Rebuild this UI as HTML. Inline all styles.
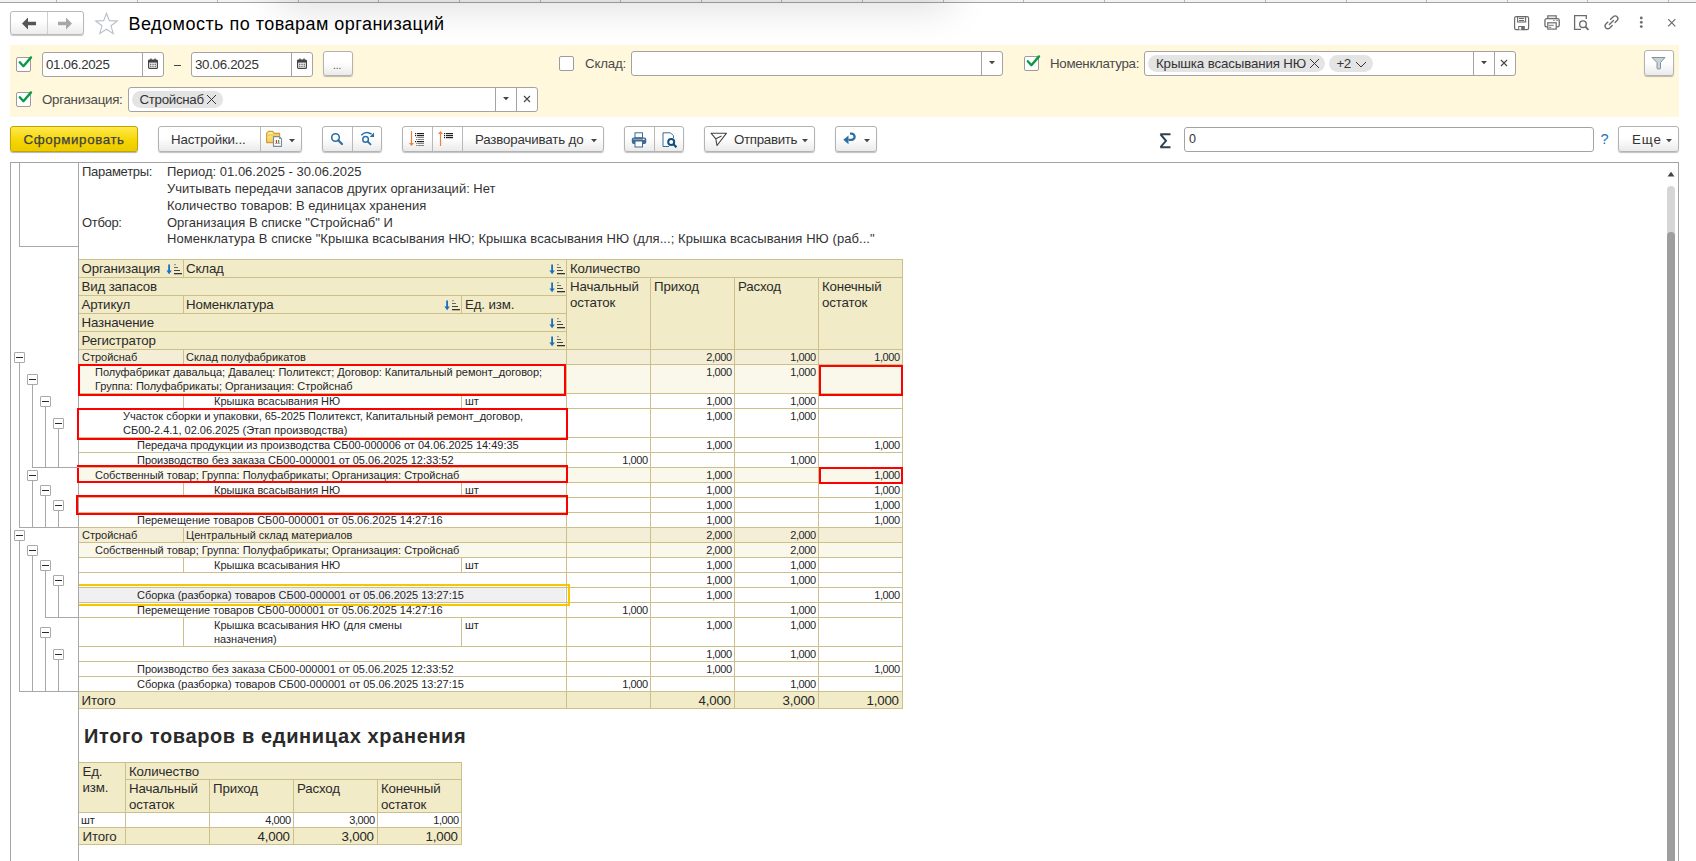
<!DOCTYPE html>
<html><head><meta charset="utf-8"><style>
html,body{margin:0;padding:0;width:1696px;height:861px;overflow:hidden;background:#fff;position:relative;}
body{font-family:"Liberation Sans", sans-serif;}
.t{position:absolute;white-space:pre;line-height:1;font-family:"Liberation Sans", sans-serif;}
svg{overflow:visible;}
</style></head><body>
<div style="position:absolute;left:0px;top:0px;width:1696px;height:2px;background:#f3f3f3;"></div>
<div style="position:absolute;left:0px;top:2px;width:1696px;height:1px;background:#a3a3a3;"></div>
<div style="position:absolute;left:56px;top:0px;width:1px;height:2px;background:#b5b5b5;"></div>
<div style="position:absolute;left:137px;top:0px;width:1px;height:2px;background:#b5b5b5;"></div>
<div style="position:absolute;left:217px;top:0px;width:1px;height:2px;background:#b5b5b5;"></div>
<div style="position:absolute;left:298px;top:0px;width:1px;height:2px;background:#b5b5b5;"></div>
<div style="position:absolute;left:378px;top:0px;width:1px;height:2px;background:#b5b5b5;"></div>
<div style="position:absolute;left:459px;top:0px;width:1px;height:2px;background:#b5b5b5;"></div>
<div style="position:absolute;left:540px;top:0px;width:1px;height:2px;background:#b5b5b5;"></div>
<div style="position:absolute;left:620px;top:0px;width:1px;height:2px;background:#b5b5b5;"></div>
<div style="position:absolute;left:701px;top:0px;width:1px;height:2px;background:#b5b5b5;"></div>
<div style="position:absolute;left:781px;top:0px;width:1px;height:2px;background:#b5b5b5;"></div>
<div style="position:absolute;left:862px;top:0px;width:1px;height:2px;background:#b5b5b5;"></div>
<div style="position:absolute;left:943px;top:0px;width:1px;height:2px;background:#b5b5b5;"></div>
<div style="position:absolute;left:1023px;top:0px;width:1px;height:2px;background:#b5b5b5;"></div>
<div style="position:absolute;left:1104px;top:0px;width:1px;height:2px;background:#b5b5b5;"></div>
<div style="position:absolute;left:1184px;top:0px;width:1px;height:2px;background:#b5b5b5;"></div>
<div style="position:absolute;left:1265px;top:0px;width:1px;height:2px;background:#b5b5b5;"></div>
<div style="position:absolute;left:1346px;top:0px;width:1px;height:2px;background:#b5b5b5;"></div>
<div style="position:absolute;left:1426px;top:0px;width:1px;height:2px;background:#b5b5b5;"></div>
<div style="position:absolute;left:1507px;top:0px;width:1px;height:2px;background:#b5b5b5;"></div>
<div style="position:absolute;left:1587px;top:0px;width:1px;height:2px;background:#b5b5b5;"></div>
<div style="position:absolute;left:1668px;top:0px;width:1px;height:2px;background:#b5b5b5;"></div>
<div style="position:absolute;left:285px;top:-24px;width:660px;height:24px;background:#000;box-shadow:0 0 40px 6px rgba(0,0,0,0.15);z-index:1;"></div>
<div style="position:absolute;left:10px;top:11px;width:73px;height:23px;border:1px solid #b9b9b9;border-radius:3px;background:linear-gradient(#ffffff 40%,#ececec);box-shadow:0 1px 1px rgba(0,0,0,0.22);box-sizing:border-box;width:74px;height:24px;"></div>
<div style="position:absolute;left:47px;top:12px;width:1px;height:22px;background:#cfcfcf;"></div>
<svg style="position:absolute;left:22px;top:17px;" width="15" height="13" viewBox="0 0 15 13"><path d="M0 6.5 L6 0.5 L6 4.8 L14 4.8 L14 8.2 L6 8.2 L6 12.5 Z" fill="#555"/></svg>
<svg style="position:absolute;left:57px;top:17px;" width="15" height="13" viewBox="0 0 15 13"><path d="M15 6.5 L9 0.5 L9 4.8 L1 4.8 L1 8.2 L9 8.2 L9 12.5 Z" fill="#a8a8a8"/></svg>
<svg style="position:absolute;left:94px;top:12px;" width="25" height="23" viewBox="0 0 25 23"><path d="M12.5 1.2 L15.3 8.6 L23.3 8.9 L17 13.8 L19.2 21.6 L12.5 17.2 L5.8 21.6 L8 13.8 L1.7 8.9 L9.7 8.6 Z" fill="none" stroke="#b7bec6" stroke-width="1.1" stroke-linejoin="miter"/></svg>
<div class="t" style="left:128.5px;top:14.76px;font-size:18px;color:#000;letter-spacing:0.48px;">Ведомость по товарам организаций</div>
<svg style="position:absolute;left:1513px;top:15px;" width="17" height="16" viewBox="0 0 17 16"><rect x="1.6" y="1.6" width="14" height="13" rx="1.6" fill="none" stroke="#6b6b6b" stroke-width="1.2"/><rect x="4.6" y="1.6" width="8" height="5.4" fill="none" stroke="#6b6b6b" stroke-width="1.1"/><line x1="6" y1="3.5" x2="11.2" y2="3.5" stroke="#6b6b6b" stroke-width="1"/><line x1="6" y1="5.5" x2="11.2" y2="5.5" stroke="#6b6b6b" stroke-width="1"/><rect x="5.2" y="11" width="6.6" height="3.6" fill="#6b6b6b"/><rect x="6.2" y="12" width="2" height="2.6" fill="#fff"/></svg>
<svg style="position:absolute;left:1543px;top:14px;" width="18" height="17" viewBox="0 0 18 17"><rect x="4.8" y="1.85" width="8.4" height="2.6" fill="none" stroke="#6b6b6b" stroke-width="1.2"/><rect x="1.95" y="4.65" width="14.3" height="8.3" rx="1.8" fill="none" stroke="#6b6b6b" stroke-width="1.3"/><rect x="4.8" y="8.8" width="8.4" height="6.3" fill="#fff" stroke="#6b6b6b" stroke-width="1.2"/><line x1="5.9" y1="11.3" x2="10.8" y2="11.3" stroke="#6b6b6b" stroke-width="0.9"/><line x1="5.9" y1="13.3" x2="8.3" y2="13.3" stroke="#6b6b6b" stroke-width="0.9"/><line x1="10.2" y1="6.4" x2="11.7" y2="6.4" stroke="#6b6b6b" stroke-width="0.9"/><line x1="13.2" y1="6.4" x2="14.8" y2="6.4" stroke="#6b6b6b" stroke-width="0.9"/></svg>
<svg style="position:absolute;left:1573px;top:14px;" width="18" height="17" viewBox="0 0 18 17"><path d="M8 15.3 L1.6 15.3 L1.6 1.6 L13.3 1.6 L13.3 5" fill="none" stroke="#6b6b6b" stroke-width="1.3"/><circle cx="10" cy="10.2" r="3.3" fill="none" stroke="#6b6b6b" stroke-width="1.4"/><line x1="12.3" y1="12.6" x2="15.5" y2="15.8" stroke="#6b6b6b" stroke-width="1.8"/></svg>
<svg style="position:absolute;left:1603px;top:14px;" width="18" height="17" viewBox="0 0 18 17"><path d="M4.9 8.1 L2.89 10.09 A2.7 2.7 0 0 0 6.71 13.91 L9.2 11.4" fill="none" stroke="#6b6b6b" stroke-width="1.35" stroke-linecap="round"/><path d="M7.6 5.3 L10.24 2.74 A2.7 2.7 0 0 1 14.06 6.56 L12.06 8.56" fill="none" stroke="#6b6b6b" stroke-width="1.35" stroke-linecap="round"/><line x1="6.4" y1="10.6" x2="10.5" y2="6.5" stroke="#6b6b6b" stroke-width="1.35" stroke-linecap="round"/></svg>
<svg style="position:absolute;left:1639px;top:16px;" width="5" height="13" viewBox="0 0 5 13"><circle cx="2.3" cy="2" r="1.4" fill="#6b6b6b"/><circle cx="2.3" cy="6.3" r="1.4" fill="#6b6b6b"/><circle cx="2.3" cy="10.6" r="1.4" fill="#6b6b6b"/></svg>
<svg style="position:absolute;left:1667px;top:18px;" width="10" height="10" viewBox="0 0 10 10"><path d="M1.2 1.2 L8.3 8.3 M8.3 1.2 L1.2 8.3" stroke="#6b6b6b" stroke-width="1.2"/></svg>
<div style="position:absolute;left:10px;top:45px;width:1669px;height:72px;background:#fff8dc;"></div>
<div style="position:absolute;left:16px;top:57px;width:15px;height:15px;box-sizing:border-box;border:1px solid #9c9c9c;border-radius:2px;background:#fff;"></div>
<svg style="position:absolute;left:18px;top:56px;" width="15" height="13" viewBox="0 0 15 13"><path d="M1.8 6.3 L5.4 10.2 L13 1.4" fill="none" stroke="#0b9a44" stroke-width="2.4" stroke-linecap="round" stroke-linejoin="round"/></svg>
<div style="position:absolute;left:42px;top:52px;width:122px;height:25px;box-sizing:border-box;border:1px solid #a3a3a3;border-radius:3px;background:#fff;"></div>
<div style="position:absolute;left:142px;top:52px;width:1px;height:25px;background:#a3a3a3;"></div>
<div class="t" style="left:46px;top:57.74px;font-size:13.3px;color:#333;letter-spacing:-0.3px;">01.06.2025</div>
<svg style="position:absolute;left:148px;top:58px;" width="10" height="11" viewBox="0 0 10 11"><rect x="0.6" y="2" width="8.8" height="8.4" rx="1" fill="#fff" stroke="#444" stroke-width="1.2"/><rect x="0.6" y="2" width="8.8" height="2.6" fill="#444"/><rect x="2.3" y="0.5" width="1.3" height="2.5" fill="#444"/><rect x="6.4" y="0.5" width="1.3" height="2.5" fill="#444"/><g fill="#444"><circle cx="2.8" cy="6.3" r="0.7"/><circle cx="5" cy="6.3" r="0.7"/><circle cx="7.2" cy="6.3" r="0.7"/><circle cx="2.8" cy="8.3" r="0.7"/><circle cx="5" cy="8.3" r="0.7"/><circle cx="7.2" cy="8.3" r="0.7"/></g></svg>
<div style="position:absolute;left:174px;top:65px;width:7px;height:1px;background:#444;"></div>
<div style="position:absolute;left:191px;top:52px;width:122px;height:25px;box-sizing:border-box;border:1px solid #a3a3a3;border-radius:3px;background:#fff;"></div>
<div style="position:absolute;left:291px;top:52px;width:1px;height:25px;background:#a3a3a3;"></div>
<div class="t" style="left:195px;top:57.74px;font-size:13.3px;color:#333;letter-spacing:-0.3px;">30.06.2025</div>
<svg style="position:absolute;left:297px;top:58px;" width="10" height="11" viewBox="0 0 10 11"><rect x="0.6" y="2" width="8.8" height="8.4" rx="1" fill="#fff" stroke="#444" stroke-width="1.2"/><rect x="0.6" y="2" width="8.8" height="2.6" fill="#444"/><rect x="2.3" y="0.5" width="1.3" height="2.5" fill="#444"/><rect x="6.4" y="0.5" width="1.3" height="2.5" fill="#444"/><g fill="#444"><circle cx="2.8" cy="6.3" r="0.7"/><circle cx="5" cy="6.3" r="0.7"/><circle cx="7.2" cy="6.3" r="0.7"/><circle cx="2.8" cy="8.3" r="0.7"/><circle cx="5" cy="8.3" r="0.7"/><circle cx="7.2" cy="8.3" r="0.7"/></g></svg>
<div style="position:absolute;left:323px;top:51px;width:30px;height:25px;box-sizing:border-box;border:1px solid #b3b3b3;border-radius:3px;background:linear-gradient(#ffffff 45%,#ebebeb);box-shadow:0 1px 1px rgba(0,0,0,0.25);"></div>
<div class="t" style="left:333px;top:60.53px;font-size:10px;color:#444;">...</div>
<div style="position:absolute;left:559px;top:56px;width:15px;height:15px;box-sizing:border-box;border:1px solid #9c9c9c;border-radius:2px;background:#fff;"></div>
<div class="t" style="left:585px;top:57.24px;font-size:13.3px;color:#4a4a4a;letter-spacing:-0.2px;">Склад:</div>
<div style="position:absolute;left:631px;top:51px;width:372px;height:25px;box-sizing:border-box;border:1px solid #a3a3a3;border-radius:3px;background:#fff;"></div>
<div style="position:absolute;left:981px;top:51px;width:1px;height:25px;background:#a3a3a3;"></div>
<svg style="position:absolute;left:988.5px;top:61px;" width="7" height="4" viewBox="0 0 7 4"><path d="M0 0 L6 0 L3 3.3 Z" fill="#444"/></svg>
<div style="position:absolute;left:1024px;top:56px;width:15px;height:15px;box-sizing:border-box;border:1px solid #9c9c9c;border-radius:2px;background:#fff;"></div>
<svg style="position:absolute;left:1026px;top:55px;" width="15" height="13" viewBox="0 0 15 13"><path d="M1.8 6.3 L5.4 10.2 L13 1.4" fill="none" stroke="#0b9a44" stroke-width="2.4" stroke-linecap="round" stroke-linejoin="round"/></svg>
<div class="t" style="left:1050px;top:57.24px;font-size:13.3px;color:#4a4a4a;letter-spacing:-0.3px;">Номенклатура:</div>
<div style="position:absolute;left:1144px;top:51px;width:372px;height:25px;box-sizing:border-box;border:1px solid #a3a3a3;border-radius:3px;background:#fff;"></div>
<div style="position:absolute;left:1473px;top:51px;width:1px;height:25px;background:#a3a3a3;"></div>
<div style="position:absolute;left:1494px;top:51px;width:1px;height:25px;background:#a3a3a3;"></div>
<svg style="position:absolute;left:1480.5px;top:61px;" width="7" height="4" viewBox="0 0 7 4"><path d="M0 0 L6 0 L3 3.3 Z" fill="#444"/></svg>
<svg style="position:absolute;left:1500px;top:59px;" width="9" height="9" viewBox="0 0 9 9"><path d="M1 1 L7 7 M7 1 L1 7" stroke="#444" stroke-width="1.1"/></svg>
<div style="position:absolute;left:1148px;top:55px;width:177px;height:17px;background:#e4e4e4;border-radius:9px;"></div>
<div class="t" style="left:1156px;top:57.24px;font-size:13.3px;color:#333;letter-spacing:-0.13px;">Крышка всасывания НЮ</div>
<svg style="position:absolute;left:1309px;top:58px;" width="11" height="11" viewBox="0 0 11 11"><path d="M1 1 L10 10 M10 1 L1 10" stroke="#333" stroke-width="1.0"/></svg>
<div style="position:absolute;left:1329px;top:55px;width:44px;height:17px;background:#e4e4e4;border-radius:9px;"></div>
<div class="t" style="left:1336.5px;top:57.24px;font-size:13.3px;color:#333;letter-spacing:-0.6px;">+2</div>
<svg style="position:absolute;left:1354.5px;top:60.5px;" width="12" height="8" viewBox="0 0 12 8"><path d="M1 1 L6 6 L11 1" fill="none" stroke="#333" stroke-width="1.0"/></svg>
<div style="position:absolute;left:1644px;top:50px;width:30px;height:26px;box-sizing:border-box;border:1px solid #b3b3b3;border-radius:3px;background:linear-gradient(#ffffff 45%,#ebebeb);box-shadow:0 1px 1px rgba(0,0,0,0.25);"></div>
<svg style="position:absolute;left:1651px;top:56px;" width="16" height="14" viewBox="0 0 16 14"><path d="M1 1.5 L14 1.5 L9.5 6.5 L9.5 12 A1 1 0 0 1 8.5 13 L7 13 A1 1 0 0 1 6 12 L6 6.5 Z" fill="#c9d1d9" stroke="#8593a0" stroke-width="1"/></svg>
<div style="position:absolute;left:16px;top:92px;width:15px;height:15px;box-sizing:border-box;border:1px solid #9c9c9c;border-radius:2px;background:#fff;"></div>
<svg style="position:absolute;left:18px;top:91px;" width="15" height="13" viewBox="0 0 15 13"><path d="M1.8 6.3 L5.4 10.2 L13 1.4" fill="none" stroke="#0b9a44" stroke-width="2.4" stroke-linecap="round" stroke-linejoin="round"/></svg>
<div class="t" style="left:42px;top:93.24px;font-size:13.3px;color:#4a4a4a;letter-spacing:-0.28px;">Организация:</div>
<div style="position:absolute;left:128px;top:87px;width:410px;height:25px;box-sizing:border-box;border:1px solid #a3a3a3;border-radius:3px;background:#fff;"></div>
<div style="position:absolute;left:495px;top:87px;width:1px;height:25px;background:#a3a3a3;"></div>
<div style="position:absolute;left:516px;top:87px;width:1px;height:25px;background:#a3a3a3;"></div>
<svg style="position:absolute;left:502.5px;top:97px;" width="7" height="4" viewBox="0 0 7 4"><path d="M0 0 L6 0 L3 3.3 Z" fill="#444"/></svg>
<svg style="position:absolute;left:523px;top:95px;" width="9" height="9" viewBox="0 0 9 9"><path d="M1 1 L7 7 M7 1 L1 7" stroke="#444" stroke-width="1.1"/></svg>
<div style="position:absolute;left:132px;top:91px;width:91px;height:17px;background:#e4e4e4;border-radius:9px;"></div>
<div class="t" style="left:139.5px;top:93.24px;font-size:13.3px;color:#333;letter-spacing:-0.3px;">Стройснаб</div>
<svg style="position:absolute;left:206px;top:93.5px;" width="11" height="11" viewBox="0 0 11 11"><path d="M1 1 L10 10 M10 1 L1 10" stroke="#333" stroke-width="1.0"/></svg>
<div style="position:absolute;left:10px;top:126px;width:128px;height:26px;box-sizing:border-box;border:1px solid #c2a400;border-radius:3px;background:linear-gradient(#ffe94d,#f5d400 60%,#eccb00);box-shadow:0 1px 1px rgba(0,0,0,0.3);"></div>
<div class="t" style="left:23.5px;top:132.74px;font-size:13.3px;color:#3a3f4a;letter-spacing:0.62px;-webkit-text-stroke:0.25px #3a3f4a;">Сформировать</div>
<div style="position:absolute;left:158px;top:126px;width:144px;height:26px;box-sizing:border-box;border:1px solid #b3b3b3;border-radius:3px;background:linear-gradient(#ffffff 45%,#ebebeb);box-shadow:0 1px 1px rgba(0,0,0,0.25);"></div>
<div style="position:absolute;left:260px;top:127px;width:1px;height:24px;background:#b8b8b8;"></div>
<div class="t" style="left:171px;top:132.74px;font-size:13.3px;color:#333;letter-spacing:-0.15px;">Настройки...</div>
<svg style="position:absolute;left:262px;top:128px;" width="24" height="22" viewBox="0 0 24 22"><defs><linearGradient id="fg" x1="0" y1="0" x2="0" y2="1"><stop offset="0" stop-color="#fff38a"/><stop offset="1" stop-color="#f2cc5a"/></linearGradient></defs><path d="M4.6 14.6 L4.6 5.2 L6.6 3.4 L10.6 3.4 L12.2 5.4 L17.6 5.4 L17.6 14.6 Z" fill="url(#fg)" stroke="#d19a3c" stroke-width="1.1" stroke-linejoin="round"/><line x1="4.8" y1="7" x2="17.4" y2="7" stroke="#dcae4e" stroke-width="0.8"/><path d="M11.5 8.6 L17.3 8.6 L19.5 10.8 L19.5 18.4 L11.5 18.4 Z" fill="#fff" stroke="#7d8b98" stroke-width="1.1" stroke-linejoin="round"/><path d="M17.2 8.6 L17.2 10.9 L19.5 10.9 Z" fill="#7d8b98"/><rect x="13.8" y="12" width="1.3" height="3.2" fill="#e8302c"/><rect x="16" y="12" width="1.3" height="3.2" fill="#3cb04a"/><line x1="13" y1="15.5" x2="18.2" y2="15.5" stroke="#8a7fa0" stroke-width="0.6"/></svg>
<svg style="position:absolute;left:289px;top:139px;" width="7" height="4" viewBox="0 0 7 4"><path d="M0 0 L6 0 L3 3.3 Z" fill="#444"/></svg>
<div style="position:absolute;left:322px;top:126px;width:60px;height:26px;box-sizing:border-box;border:1px solid #b3b3b3;border-radius:3px;background:linear-gradient(#ffffff 45%,#ebebeb);box-shadow:0 1px 1px rgba(0,0,0,0.25);"></div>
<div style="position:absolute;left:352px;top:127px;width:1px;height:24px;background:#b8b8b8;"></div>
<svg style="position:absolute;left:330px;top:131px;" width="14" height="15" viewBox="0 0 14 15"><circle cx="5.5" cy="6.5" r="3.8" fill="none" stroke="#2a6fa8" stroke-width="1.6"/><line x1="8.2" y1="9.2" x2="12" y2="13" stroke="#2a6fa8" stroke-width="2.2" stroke-linecap="round"/></svg>
<svg style="position:absolute;left:359px;top:130px;" width="17" height="17" viewBox="0 0 17 17"><path d="M2.2 5.2 Q7.2 0.4 12.6 4.2" fill="none" stroke="#2a6fa8" stroke-width="1.5"/><path d="M10.6 6.9 L15.1 6.9 L15 2.6 Z" fill="#2a6fa8"/><circle cx="6.6" cy="9.4" r="2.8" fill="none" stroke="#2a6fa8" stroke-width="1.5"/><line x1="8.6" y1="11.4" x2="11.5" y2="14.4" stroke="#2a6fa8" stroke-width="1.8" stroke-linecap="round"/></svg>
<div style="position:absolute;left:402px;top:126px;width:202px;height:26px;box-sizing:border-box;border:1px solid #b3b3b3;border-radius:3px;background:linear-gradient(#ffffff 45%,#ebebeb);box-shadow:0 1px 1px rgba(0,0,0,0.25);"></div>
<div style="position:absolute;left:432px;top:127px;width:1px;height:24px;background:#b8b8b8;"></div>
<div style="position:absolute;left:462px;top:127px;width:1px;height:24px;background:#b8b8b8;"></div>
<svg style="position:absolute;left:408px;top:130px;" width="18" height="18" viewBox="0 0 18 18"><line x1="3.5" y1="1" x2="3.5" y2="13" stroke="#f08040" stroke-width="1.2"/><path d="M1 13 L6 13 L3.5 16 Z" fill="#f08040"/><g fill="#222"><rect x="7" y="3" width="1.2" height="1.2"/><rect x="9" y="3" width="7" height="1.2"/><rect x="7" y="5" width="1.2" height="1.2"/><rect x="9" y="5" width="7" height="1.2"/><rect x="7" y="11" width="1.2" height="1.2"/><rect x="9" y="11" width="7" height="1.2"/></g><g fill="#888"><rect x="8" y="7" width="1" height="1"/><rect x="9.5" y="7" width="6.5" height="1"/><rect x="8" y="9" width="1" height="1"/><rect x="9.5" y="9" width="6.5" height="1"/><rect x="8" y="13" width="1" height="1"/><rect x="9.5" y="13" width="6.5" height="1"/><rect x="8" y="15" width="1" height="1"/><rect x="9.5" y="15" width="6.5" height="1"/></g></svg>
<svg style="position:absolute;left:436px;top:130px;" width="18" height="18" viewBox="0 0 18 18"><line x1="4.5" y1="4" x2="4.5" y2="16" stroke="#f08040" stroke-width="1.2"/><path d="M2 4 L7 4 L4.5 1 Z" fill="#f08040"/><g fill="#222"><rect x="8" y="3" width="1.2" height="1.2"/><rect x="10" y="3" width="7" height="1.2"/><rect x="8" y="5" width="1.2" height="1.2"/><rect x="10" y="5" width="7" height="1.2"/><rect x="8" y="7" width="1.2" height="1.2"/><rect x="10" y="7" width="7" height="1.2"/></g></svg>
<div class="t" style="left:475px;top:132.74px;font-size:13.3px;color:#333;letter-spacing:-0.15px;">Разворачивать до</div>
<svg style="position:absolute;left:591px;top:139px;" width="7" height="4" viewBox="0 0 7 4"><path d="M0 0 L6 0 L3 3.3 Z" fill="#444"/></svg>
<div style="position:absolute;left:624px;top:126px;width:60px;height:26px;box-sizing:border-box;border:1px solid #b3b3b3;border-radius:3px;background:linear-gradient(#ffffff 45%,#ebebeb);box-shadow:0 1px 1px rgba(0,0,0,0.25);"></div>
<div style="position:absolute;left:654px;top:127px;width:1px;height:24px;background:#b8b8b8;"></div>
<svg style="position:absolute;left:631px;top:132px;" width="16" height="16" viewBox="0 0 16 16"><rect x="4" y="0.8" width="7.5" height="5" fill="#fff" stroke="#3d6a94" stroke-width="1"/><rect x="0.8" y="5.5" width="14.5" height="6.5" rx="2" fill="#3d6a94"/><rect x="2" y="6.8" width="12" height="1.2" fill="#7fa2c2"/><rect x="4" y="9" width="7.5" height="6" fill="#fff" stroke="#3d6a94" stroke-width="1"/><rect x="12" y="6.8" width="1.5" height="1" fill="#fff"/></svg>
<svg style="position:absolute;left:662px;top:132px;" width="17" height="17" viewBox="0 0 17 17"><path d="M7 14.5 L1 14.5 L1 0.8 L8.5 0.8 L11.5 3.8 L11.5 6" fill="#fff" stroke="#3d6a94" stroke-width="1"/><circle cx="9.2" cy="10" r="3" fill="none" stroke="#0e4f80" stroke-width="2"/><line x1="11.5" y1="12.3" x2="14.5" y2="15.3" stroke="#0e4f80" stroke-width="2.2"/></svg>
<div style="position:absolute;left:704px;top:126px;width:111px;height:26px;box-sizing:border-box;border:1px solid #b3b3b3;border-radius:3px;background:linear-gradient(#ffffff 45%,#ebebeb);box-shadow:0 1px 1px rgba(0,0,0,0.25);"></div>
<svg style="position:absolute;left:710px;top:132px;" width="18" height="15" viewBox="0 0 18 15"><path d="M1 1.2 L16.5 1.2 L7 13.5 L5.8 6.8 Z M5.8 6.8 L11.5 4" fill="none" stroke="#444" stroke-width="1.1" stroke-linejoin="round"/></svg>
<div class="t" style="left:734px;top:132.74px;font-size:13.3px;color:#333;letter-spacing:-0.3px;">Отправить</div>
<svg style="position:absolute;left:802px;top:139px;" width="7" height="4" viewBox="0 0 7 4"><path d="M0 0 L6 0 L3 3.3 Z" fill="#444"/></svg>
<div style="position:absolute;left:835px;top:126px;width:42px;height:26px;box-sizing:border-box;border:1px solid #b3b3b3;border-radius:3px;background:linear-gradient(#ffffff 45%,#ebebeb);box-shadow:0 1px 1px rgba(0,0,0,0.25);"></div>
<svg style="position:absolute;left:843px;top:133px;" width="14" height="13" viewBox="0 0 14 13"><path d="M5.5 6.8 L8.5 6.8 A3.1 3.1 0 0 0 8.5 0.6 L7 0.6" fill="none" stroke="#2a6fa8" stroke-width="2.3"/><path d="M0.3 6.8 L5.5 2.6 L5.5 11.2 Z" fill="#2a6fa8"/></svg>
<svg style="position:absolute;left:864px;top:139px;" width="7" height="4" viewBox="0 0 7 4"><path d="M0 0 L6 0 L3 3.3 Z" fill="#444"/></svg>
<svg style="position:absolute;left:1159px;top:132.7px;" width="13" height="16" viewBox="0 0 13 16"><path d="M1.2 1.2 L11.5 1.2 M1.2 14.3 L11.5 14.3 M1.5 1.3 L7 7.8 L1.5 14.2" fill="none" stroke="#2f4252" stroke-width="2"/></svg>
<div style="position:absolute;left:1184px;top:127px;width:410px;height:25px;box-sizing:border-box;border:1px solid #a3a3a3;border-radius:3px;background:#fff;"></div>
<div class="t" style="left:1189px;top:133.42px;font-size:12.5px;color:#333;">0</div>
<div class="t" style="left:1600.5px;top:132.03px;font-size:14.5px;color:#1b75bc;">?</div>
<div style="position:absolute;left:1618px;top:126px;width:61px;height:26px;box-sizing:border-box;border:1px solid #b3b3b3;border-radius:3px;background:linear-gradient(#ffffff 45%,#ebebeb);box-shadow:0 1px 1px rgba(0,0,0,0.25);"></div>
<div class="t" style="left:1632px;top:132.74px;font-size:13.3px;color:#333;letter-spacing:0.9px;">Еще</div>
<svg style="position:absolute;left:1666px;top:139px;" width="7" height="4" viewBox="0 0 7 4"><path d="M0 0 L6 0 L3 3.3 Z" fill="#444"/></svg>
<div style="position:absolute;left:10px;top:162px;width:1669px;height:700px;box-sizing:border-box;border:1px solid #a3a3a3;border-bottom:none;background:#fff;"></div>
<svg style="position:absolute;left:1667px;top:171px;" width="8" height="6" viewBox="0 0 8 6"><path d="M0.5 5.5 L7.5 5.5 L4 0.8 Z" fill="#444"/></svg>
<div style="position:absolute;left:1667px;top:186px;width:8px;height:700px;background:#d6d6d6;border-radius:4px;"></div>
<div style="position:absolute;left:1667px;top:232px;width:8px;height:700px;background:#9e9e9e;border-radius:4px;"></div>
<div style="position:absolute;left:19px;top:162px;width:1px;height:85px;background:#a8a8a8;"></div>
<div style="position:absolute;left:19px;top:246px;width:60px;height:1px;background:#a8a8a8;"></div>
<div style="position:absolute;left:78px;top:162px;width:1px;height:700px;background:#a8a8a8;"></div>
<div class="t" style="left:82px;top:165.00px;font-size:13px;color:#333;letter-spacing:-0.27px;">Параметры:</div>
<div class="t" style="left:167px;top:165.00px;font-size:13px;color:#333;">Период: 01.06.2025 - 30.06.2025</div>
<div class="t" style="left:167px;top:182.00px;font-size:13px;color:#333;">Учитывать передачи запасов других организаций: Нет</div>
<div class="t" style="left:167px;top:199.00px;font-size:13px;color:#333;">Количество товаров: В единицах хранения</div>
<div class="t" style="left:82px;top:216.00px;font-size:13px;color:#333;letter-spacing:-0.34px;">Отбор:</div>
<div class="t" style="left:167px;top:216.00px;font-size:13px;color:#333;">Организация В списке "Стройснаб" И</div>
<div class="t" style="left:167px;top:232.00px;font-size:13px;color:#333;letter-spacing:0.07px;">Номенклатура В списке "Крышка всасывания НЮ; Крышка всасывания НЮ (для...; Крышка всасывания НЮ (раб..."</div>
<div style="position:absolute;left:79px;top:259px;width:823px;height:90px;background:#f2ebc7;"></div>
<div style="position:absolute;left:79px;top:349px;width:823px;height:15px;background:#f4eed6;"></div>
<div style="position:absolute;left:79px;top:364px;width:823px;height:29px;background:#faf7eb;"></div>
<div style="position:absolute;left:79px;top:467px;width:823px;height:15px;background:#faf7eb;"></div>
<div style="position:absolute;left:79px;top:527px;width:823px;height:15px;background:#f4eed6;"></div>
<div style="position:absolute;left:79px;top:542px;width:823px;height:15px;background:#faf7eb;"></div>
<div style="position:absolute;left:79px;top:588px;width:486px;height:14px;background:#f0f0f0;"></div>
<div style="position:absolute;left:79px;top:691px;width:823px;height:17px;background:#f2ebc7;"></div>
<div style="position:absolute;left:79px;top:259px;width:824px;height:1px;background:#cdbf8c;"></div>
<div style="position:absolute;left:79px;top:277px;width:824px;height:1px;background:#cdbf8c;"></div>
<div style="position:absolute;left:79px;top:295px;width:824px;height:1px;background:#cdbf8c;"></div>
<div style="position:absolute;left:79px;top:313px;width:824px;height:1px;background:#cdbf8c;"></div>
<div style="position:absolute;left:79px;top:331px;width:824px;height:1px;background:#cdbf8c;"></div>
<div style="position:absolute;left:79px;top:349px;width:824px;height:1px;background:#cdbf8c;"></div>
<div style="position:absolute;left:79px;top:364px;width:824px;height:1px;background:#cdbf8c;"></div>
<div style="position:absolute;left:79px;top:393px;width:824px;height:1px;background:#cdbf8c;"></div>
<div style="position:absolute;left:79px;top:408px;width:824px;height:1px;background:#cdbf8c;"></div>
<div style="position:absolute;left:79px;top:437px;width:824px;height:1px;background:#cdbf8c;"></div>
<div style="position:absolute;left:79px;top:452px;width:824px;height:1px;background:#cdbf8c;"></div>
<div style="position:absolute;left:79px;top:467px;width:824px;height:1px;background:#cdbf8c;"></div>
<div style="position:absolute;left:79px;top:482px;width:824px;height:1px;background:#cdbf8c;"></div>
<div style="position:absolute;left:79px;top:497px;width:824px;height:1px;background:#cdbf8c;"></div>
<div style="position:absolute;left:79px;top:512px;width:824px;height:1px;background:#cdbf8c;"></div>
<div style="position:absolute;left:79px;top:527px;width:824px;height:1px;background:#cdbf8c;"></div>
<div style="position:absolute;left:79px;top:542px;width:824px;height:1px;background:#cdbf8c;"></div>
<div style="position:absolute;left:79px;top:557px;width:824px;height:1px;background:#cdbf8c;"></div>
<div style="position:absolute;left:79px;top:572px;width:824px;height:1px;background:#cdbf8c;"></div>
<div style="position:absolute;left:79px;top:587px;width:824px;height:1px;background:#cdbf8c;"></div>
<div style="position:absolute;left:79px;top:602px;width:824px;height:1px;background:#cdbf8c;"></div>
<div style="position:absolute;left:79px;top:617px;width:824px;height:1px;background:#cdbf8c;"></div>
<div style="position:absolute;left:79px;top:646px;width:824px;height:1px;background:#cdbf8c;"></div>
<div style="position:absolute;left:79px;top:661px;width:824px;height:1px;background:#cdbf8c;"></div>
<div style="position:absolute;left:79px;top:676px;width:824px;height:1px;background:#cdbf8c;"></div>
<div style="position:absolute;left:79px;top:691px;width:824px;height:1px;background:#cdbf8c;"></div>
<div style="position:absolute;left:79px;top:708px;width:824px;height:1px;background:#cdbf8c;"></div>
<div style="position:absolute;left:902px;top:259px;width:1px;height:450px;background:#cdbf8c;"></div>
<div style="position:absolute;left:566px;top:259px;width:1px;height:450px;background:#cdbf8c;"></div>
<div style="position:absolute;left:650px;top:277px;width:1px;height:432px;background:#cdbf8c;"></div>
<div style="position:absolute;left:734px;top:277px;width:1px;height:432px;background:#cdbf8c;"></div>
<div style="position:absolute;left:818px;top:277px;width:1px;height:432px;background:#cdbf8c;"></div>
<div style="position:absolute;left:566px;top:277px;width:337px;height:1px;background:#cdbf8c;"></div>
<div style="position:absolute;left:183px;top:259px;width:1px;height:18px;background:#cdbf8c;"></div>
<div style="position:absolute;left:183px;top:295px;width:1px;height:18px;background:#cdbf8c;"></div>
<div style="position:absolute;left:461px;top:295px;width:1px;height:18px;background:#cdbf8c;"></div>
<div style="position:absolute;left:183px;top:349px;width:1px;height:15px;background:#cdbf8c;"></div>
<div style="position:absolute;left:183px;top:393px;width:1px;height:15px;background:#cdbf8c;"></div>
<div style="position:absolute;left:183px;top:482px;width:1px;height:15px;background:#cdbf8c;"></div>
<div style="position:absolute;left:183px;top:527px;width:1px;height:15px;background:#cdbf8c;"></div>
<div style="position:absolute;left:183px;top:557px;width:1px;height:15px;background:#cdbf8c;"></div>
<div style="position:absolute;left:183px;top:617px;width:1px;height:29px;background:#cdbf8c;"></div>
<div style="position:absolute;left:461px;top:393px;width:1px;height:15px;background:#cdbf8c;"></div>
<div style="position:absolute;left:461px;top:482px;width:1px;height:15px;background:#cdbf8c;"></div>
<div style="position:absolute;left:461px;top:557px;width:1px;height:15px;background:#cdbf8c;"></div>
<div style="position:absolute;left:461px;top:617px;width:1px;height:29px;background:#cdbf8c;"></div>
<div style="position:absolute;left:567px;top:278px;width:335px;height:71px;background:#f2ebc7;"></div>
<div style="position:absolute;left:650px;top:277px;width:1px;height:72px;background:#cdbf8c;"></div>
<div style="position:absolute;left:734px;top:277px;width:1px;height:72px;background:#cdbf8c;"></div>
<div style="position:absolute;left:818px;top:277px;width:1px;height:72px;background:#cdbf8c;"></div>
<div class="t" style="left:81.5px;top:262.44px;font-size:13.3px;color:#2a2a2a;letter-spacing:-0.15px;">Организация</div>
<svg style="position:absolute;left:166px;top:264px;" width="17" height="11" viewBox="0 0 17 11"><path d="M2.2 0.5 L4 0.5 L4 6.5 L5.8 6.5 L3.1 10.2 L0.4 6.5 L2.2 6.5 Z" fill="#1b6fc0"/><rect x="8" y="0.2" width="2" height="1" fill="#888"/><rect x="8" y="3" width="4" height="1" fill="#666"/><rect x="8" y="6" width="6" height="1" fill="#444"/><rect x="8" y="9" width="8" height="1.3" fill="#333"/></svg>
<div class="t" style="left:186px;top:262.44px;font-size:13.3px;color:#2a2a2a;letter-spacing:-0.15px;">Склад</div>
<svg style="position:absolute;left:549px;top:264px;" width="17" height="11" viewBox="0 0 17 11"><path d="M2.2 0.5 L4 0.5 L4 6.5 L5.8 6.5 L3.1 10.2 L0.4 6.5 L2.2 6.5 Z" fill="#1b6fc0"/><rect x="8" y="0.2" width="2" height="1" fill="#888"/><rect x="8" y="3" width="4" height="1" fill="#666"/><rect x="8" y="6" width="6" height="1" fill="#444"/><rect x="8" y="9" width="8" height="1.3" fill="#333"/></svg>
<div class="t" style="left:570px;top:262.44px;font-size:13.3px;color:#2a2a2a;letter-spacing:-0.15px;">Количество</div>
<div class="t" style="left:81.5px;top:280.44px;font-size:13.3px;color:#2a2a2a;letter-spacing:-0.15px;">Вид запасов</div>
<svg style="position:absolute;left:549px;top:282px;" width="17" height="11" viewBox="0 0 17 11"><path d="M2.2 0.5 L4 0.5 L4 6.5 L5.8 6.5 L3.1 10.2 L0.4 6.5 L2.2 6.5 Z" fill="#1b6fc0"/><rect x="8" y="0.2" width="2" height="1" fill="#888"/><rect x="8" y="3" width="4" height="1" fill="#666"/><rect x="8" y="6" width="6" height="1" fill="#444"/><rect x="8" y="9" width="8" height="1.3" fill="#333"/></svg>
<div class="t" style="left:570px;top:280.44px;font-size:13.3px;color:#2a2a2a;letter-spacing:-0.15px;">Начальный</div>
<div class="t" style="left:570px;top:296.44px;font-size:13.3px;color:#2a2a2a;letter-spacing:-0.15px;">остаток</div>
<div class="t" style="left:654px;top:280.44px;font-size:13.3px;color:#2a2a2a;letter-spacing:-0.15px;">Приход</div>
<div class="t" style="left:738px;top:280.44px;font-size:13.3px;color:#2a2a2a;letter-spacing:-0.15px;">Расход</div>
<div class="t" style="left:822px;top:280.44px;font-size:13.3px;color:#2a2a2a;letter-spacing:-0.15px;">Конечный</div>
<div class="t" style="left:822px;top:296.44px;font-size:13.3px;color:#2a2a2a;letter-spacing:-0.15px;">остаток</div>
<div class="t" style="left:81.5px;top:298.44px;font-size:13.3px;color:#2a2a2a;letter-spacing:-0.15px;">Артикул</div>
<div class="t" style="left:186px;top:298.44px;font-size:13.3px;color:#2a2a2a;letter-spacing:-0.15px;">Номенклатура</div>
<svg style="position:absolute;left:444px;top:300px;" width="17" height="11" viewBox="0 0 17 11"><path d="M2.2 0.5 L4 0.5 L4 6.5 L5.8 6.5 L3.1 10.2 L0.4 6.5 L2.2 6.5 Z" fill="#1b6fc0"/><rect x="8" y="0.2" width="2" height="1" fill="#888"/><rect x="8" y="3" width="4" height="1" fill="#666"/><rect x="8" y="6" width="6" height="1" fill="#444"/><rect x="8" y="9" width="8" height="1.3" fill="#333"/></svg>
<div class="t" style="left:465px;top:298.44px;font-size:13.3px;color:#2a2a2a;letter-spacing:-0.15px;">Ед. изм.</div>
<div class="t" style="left:81.5px;top:316.44px;font-size:13.3px;color:#2a2a2a;letter-spacing:-0.15px;">Назначение</div>
<svg style="position:absolute;left:549px;top:318px;" width="17" height="11" viewBox="0 0 17 11"><path d="M2.2 0.5 L4 0.5 L4 6.5 L5.8 6.5 L3.1 10.2 L0.4 6.5 L2.2 6.5 Z" fill="#1b6fc0"/><rect x="8" y="0.2" width="2" height="1" fill="#888"/><rect x="8" y="3" width="4" height="1" fill="#666"/><rect x="8" y="6" width="6" height="1" fill="#444"/><rect x="8" y="9" width="8" height="1.3" fill="#333"/></svg>
<div class="t" style="left:81.5px;top:334.44px;font-size:13.3px;color:#2a2a2a;letter-spacing:-0.15px;">Регистратор</div>
<svg style="position:absolute;left:549px;top:336px;" width="17" height="11" viewBox="0 0 17 11"><path d="M2.2 0.5 L4 0.5 L4 6.5 L5.8 6.5 L3.1 10.2 L0.4 6.5 L2.2 6.5 Z" fill="#1b6fc0"/><rect x="8" y="0.2" width="2" height="1" fill="#888"/><rect x="8" y="3" width="4" height="1" fill="#666"/><rect x="8" y="6" width="6" height="1" fill="#444"/><rect x="8" y="9" width="8" height="1.3" fill="#333"/></svg>
<div class="t" style="left:82px;top:351.69px;font-size:11px;color:#262626;letter-spacing:-0.01px;">Стройснаб</div>
<div class="t" style="left:186px;top:351.69px;font-size:11px;color:#262626;letter-spacing:-0.01px;">Склад полуфабрикатов</div>
<div class="t" style="right:964.3px;top:351.69px;font-size:11px;color:#262626;letter-spacing:-0.4px;">2,000</div>
<div class="t" style="right:880.3px;top:351.69px;font-size:11px;color:#262626;letter-spacing:-0.4px;">1,000</div>
<div class="t" style="right:796.3px;top:351.69px;font-size:11px;color:#262626;letter-spacing:-0.4px;">1,000</div>
<div class="t" style="left:95px;top:366.69px;font-size:11px;color:#262626;letter-spacing:-0.01px;">Полуфабрикат давальца; Давалец: Политекст; Договор: Капитальный ремонт_договор;</div>
<div class="t" style="left:95px;top:380.69px;font-size:11px;color:#262626;letter-spacing:-0.01px;">Группа: Полуфабрикаты; Организация: Стройснаб</div>
<div class="t" style="right:964.3px;top:366.69px;font-size:11px;color:#262626;letter-spacing:-0.4px;">1,000</div>
<div class="t" style="right:880.3px;top:366.69px;font-size:11px;color:#262626;letter-spacing:-0.4px;">1,000</div>
<div class="t" style="left:214px;top:395.69px;font-size:11px;color:#262626;letter-spacing:-0.01px;">Крышка всасывания НЮ</div>
<div class="t" style="left:465px;top:395.69px;font-size:11px;color:#262626;letter-spacing:-0.01px;">шт</div>
<div class="t" style="right:964.3px;top:395.69px;font-size:11px;color:#262626;letter-spacing:-0.4px;">1,000</div>
<div class="t" style="right:880.3px;top:395.69px;font-size:11px;color:#262626;letter-spacing:-0.4px;">1,000</div>
<div class="t" style="left:123px;top:410.69px;font-size:11px;color:#262626;letter-spacing:-0.01px;">Участок сборки и упаковки, 65-2025 Политекст, Капитальный ремонт_договор,</div>
<div class="t" style="left:123px;top:424.69px;font-size:11px;color:#262626;letter-spacing:-0.01px;">СБ00-2.4.1, 02.06.2025 (Этап производства)</div>
<div class="t" style="right:964.3px;top:410.69px;font-size:11px;color:#262626;letter-spacing:-0.4px;">1,000</div>
<div class="t" style="right:880.3px;top:410.69px;font-size:11px;color:#262626;letter-spacing:-0.4px;">1,000</div>
<div class="t" style="left:137px;top:439.69px;font-size:11px;color:#262626;letter-spacing:-0.01px;">Передача продукции из производства СБ00-000006 от 04.06.2025 14:49:35</div>
<div class="t" style="right:964.3px;top:439.69px;font-size:11px;color:#262626;letter-spacing:-0.4px;">1,000</div>
<div class="t" style="right:796.3px;top:439.69px;font-size:11px;color:#262626;letter-spacing:-0.4px;">1,000</div>
<div class="t" style="left:137px;top:454.69px;font-size:11px;color:#262626;letter-spacing:-0.01px;">Производство без заказа СБ00-000001 от 05.06.2025 12:33:52</div>
<div class="t" style="right:1048.3px;top:454.69px;font-size:11px;color:#262626;letter-spacing:-0.4px;">1,000</div>
<div class="t" style="right:880.3px;top:454.69px;font-size:11px;color:#262626;letter-spacing:-0.4px;">1,000</div>
<div class="t" style="left:95px;top:469.69px;font-size:11px;color:#262626;letter-spacing:-0.01px;">Собственный товар; Группа: Полуфабрикаты; Организация: Стройснаб</div>
<div class="t" style="right:964.3px;top:469.69px;font-size:11px;color:#262626;letter-spacing:-0.4px;">1,000</div>
<div class="t" style="right:796.3px;top:469.69px;font-size:11px;color:#262626;letter-spacing:-0.4px;">1,000</div>
<div class="t" style="left:214px;top:484.69px;font-size:11px;color:#262626;letter-spacing:-0.01px;">Крышка всасывания НЮ</div>
<div class="t" style="left:465px;top:484.69px;font-size:11px;color:#262626;letter-spacing:-0.01px;">шт</div>
<div class="t" style="right:964.3px;top:484.69px;font-size:11px;color:#262626;letter-spacing:-0.4px;">1,000</div>
<div class="t" style="right:796.3px;top:484.69px;font-size:11px;color:#262626;letter-spacing:-0.4px;">1,000</div>
<div class="t" style="right:964.3px;top:499.69px;font-size:11px;color:#262626;letter-spacing:-0.4px;">1,000</div>
<div class="t" style="right:796.3px;top:499.69px;font-size:11px;color:#262626;letter-spacing:-0.4px;">1,000</div>
<div class="t" style="left:137px;top:514.69px;font-size:11px;color:#262626;letter-spacing:-0.01px;">Перемещение товаров СБ00-000001 от 05.06.2025 14:27:16</div>
<div class="t" style="right:964.3px;top:514.69px;font-size:11px;color:#262626;letter-spacing:-0.4px;">1,000</div>
<div class="t" style="right:796.3px;top:514.69px;font-size:11px;color:#262626;letter-spacing:-0.4px;">1,000</div>
<div class="t" style="left:82px;top:529.69px;font-size:11px;color:#262626;letter-spacing:-0.01px;">Стройснаб</div>
<div class="t" style="left:186px;top:529.69px;font-size:11px;color:#262626;letter-spacing:-0.01px;">Центральный склад материалов</div>
<div class="t" style="right:964.3px;top:529.69px;font-size:11px;color:#262626;letter-spacing:-0.4px;">2,000</div>
<div class="t" style="right:880.3px;top:529.69px;font-size:11px;color:#262626;letter-spacing:-0.4px;">2,000</div>
<div class="t" style="left:95px;top:544.69px;font-size:11px;color:#262626;letter-spacing:-0.01px;">Собственный товар; Группа: Полуфабрикаты; Организация: Стройснаб</div>
<div class="t" style="right:964.3px;top:544.69px;font-size:11px;color:#262626;letter-spacing:-0.4px;">2,000</div>
<div class="t" style="right:880.3px;top:544.69px;font-size:11px;color:#262626;letter-spacing:-0.4px;">2,000</div>
<div class="t" style="left:214px;top:559.69px;font-size:11px;color:#262626;letter-spacing:-0.01px;">Крышка всасывания НЮ</div>
<div class="t" style="left:465px;top:559.69px;font-size:11px;color:#262626;letter-spacing:-0.01px;">шт</div>
<div class="t" style="right:964.3px;top:559.69px;font-size:11px;color:#262626;letter-spacing:-0.4px;">1,000</div>
<div class="t" style="right:880.3px;top:559.69px;font-size:11px;color:#262626;letter-spacing:-0.4px;">1,000</div>
<div class="t" style="right:964.3px;top:574.69px;font-size:11px;color:#262626;letter-spacing:-0.4px;">1,000</div>
<div class="t" style="right:880.3px;top:574.69px;font-size:11px;color:#262626;letter-spacing:-0.4px;">1,000</div>
<div class="t" style="left:137px;top:589.69px;font-size:11px;color:#262626;letter-spacing:-0.01px;">Сборка (разборка) товаров СБ00-000001 от 05.06.2025 13:27:15</div>
<div class="t" style="right:964.3px;top:589.69px;font-size:11px;color:#262626;letter-spacing:-0.4px;">1,000</div>
<div class="t" style="right:796.3px;top:589.69px;font-size:11px;color:#262626;letter-spacing:-0.4px;">1,000</div>
<div class="t" style="left:137px;top:604.69px;font-size:11px;color:#262626;letter-spacing:-0.01px;">Перемещение товаров СБ00-000001 от 05.06.2025 14:27:16</div>
<div class="t" style="right:1048.3px;top:604.69px;font-size:11px;color:#262626;letter-spacing:-0.4px;">1,000</div>
<div class="t" style="right:880.3px;top:604.69px;font-size:11px;color:#262626;letter-spacing:-0.4px;">1,000</div>
<div class="t" style="left:214px;top:619.69px;font-size:11px;color:#262626;letter-spacing:-0.01px;">Крышка всасывания НЮ (для смены</div>
<div class="t" style="left:214px;top:633.69px;font-size:11px;color:#262626;letter-spacing:-0.01px;">назначения)</div>
<div class="t" style="left:465px;top:619.69px;font-size:11px;color:#262626;letter-spacing:-0.01px;">шт</div>
<div class="t" style="right:964.3px;top:619.69px;font-size:11px;color:#262626;letter-spacing:-0.4px;">1,000</div>
<div class="t" style="right:880.3px;top:619.69px;font-size:11px;color:#262626;letter-spacing:-0.4px;">1,000</div>
<div class="t" style="right:964.3px;top:648.69px;font-size:11px;color:#262626;letter-spacing:-0.4px;">1,000</div>
<div class="t" style="right:880.3px;top:648.69px;font-size:11px;color:#262626;letter-spacing:-0.4px;">1,000</div>
<div class="t" style="left:137px;top:663.69px;font-size:11px;color:#262626;letter-spacing:-0.01px;">Производство без заказа СБ00-000001 от 05.06.2025 12:33:52</div>
<div class="t" style="right:964.3px;top:663.69px;font-size:11px;color:#262626;letter-spacing:-0.4px;">1,000</div>
<div class="t" style="right:796.3px;top:663.69px;font-size:11px;color:#262626;letter-spacing:-0.4px;">1,000</div>
<div class="t" style="left:137px;top:678.69px;font-size:11px;color:#262626;letter-spacing:-0.01px;">Сборка (разборка) товаров СБ00-000001 от 05.06.2025 13:27:15</div>
<div class="t" style="right:1048.3px;top:678.69px;font-size:11px;color:#262626;letter-spacing:-0.4px;">1,000</div>
<div class="t" style="right:880.3px;top:678.69px;font-size:11px;color:#262626;letter-spacing:-0.4px;">1,000</div>
<div class="t" style="left:81.5px;top:694.04px;font-size:13.3px;color:#2a2a2a;letter-spacing:-0.15px;">Итого</div>
<div class="t" style="right:965.2px;top:693.74px;font-size:13.3px;color:#262626;letter-spacing:-0.2px;">4,000</div>
<div class="t" style="right:881.2px;top:693.74px;font-size:13.3px;color:#262626;letter-spacing:-0.2px;">3,000</div>
<div class="t" style="right:797.2px;top:693.74px;font-size:13.3px;color:#262626;letter-spacing:-0.2px;">1,000</div>
<div style="position:absolute;left:78px;top:364px;width:488px;height:32px;box-sizing:border-box;border:2px solid #ff0000;"></div>
<div style="position:absolute;left:77px;top:408px;width:491px;height:32px;box-sizing:border-box;border:2px solid #ff0000;"></div>
<div style="position:absolute;left:77px;top:465px;width:491px;height:18px;box-sizing:border-box;border:2px solid #ff0000;"></div>
<div style="position:absolute;left:76px;top:495px;width:492px;height:20px;box-sizing:border-box;border:2px solid #ff0000;"></div>
<div style="position:absolute;left:819px;top:365px;width:84px;height:31px;box-sizing:border-box;border:2px solid #ff0000;"></div>
<div style="position:absolute;left:819px;top:467px;width:84px;height:17px;box-sizing:border-box;border:2px solid #ff0000;"></div>
<div style="position:absolute;left:79px;top:584px;width:491px;height:22px;box-sizing:border-box;border:2px solid #f8c600;border-left:none;"></div>
<div style="position:absolute;left:14px;top:352px;width:11px;height:11px;box-sizing:border-box;border:1px solid #a9a9a9;border-radius:1px;background:#fff;"></div>
<div style="position:absolute;left:16px;top:357px;width:7px;height:1px;background:#2a2a2a;"></div>
<div style="position:absolute;left:19px;top:363px;width:1px;height:164px;background:#a8a8a8;"></div>
<div style="position:absolute;left:19px;top:527px;width:60px;height:1px;background:#a8a8a8;"></div>
<div style="position:absolute;left:27px;top:374px;width:11px;height:11px;box-sizing:border-box;border:1px solid #a9a9a9;border-radius:1px;background:#fff;"></div>
<div style="position:absolute;left:29px;top:379px;width:7px;height:1px;background:#2a2a2a;"></div>
<div style="position:absolute;left:32px;top:385px;width:1px;height:82px;background:#a8a8a8;"></div>
<div style="position:absolute;left:32px;top:467px;width:47px;height:1px;background:#a8a8a8;"></div>
<div style="position:absolute;left:40px;top:396px;width:11px;height:11px;box-sizing:border-box;border:1px solid #a9a9a9;border-radius:1px;background:#fff;"></div>
<div style="position:absolute;left:42px;top:401px;width:7px;height:1px;background:#2a2a2a;"></div>
<div style="position:absolute;left:45px;top:407px;width:1px;height:60px;background:#a8a8a8;"></div>
<div style="position:absolute;left:53px;top:418px;width:11px;height:11px;box-sizing:border-box;border:1px solid #a9a9a9;border-radius:1px;background:#fff;"></div>
<div style="position:absolute;left:55px;top:423px;width:7px;height:1px;background:#2a2a2a;"></div>
<div style="position:absolute;left:58px;top:429px;width:1px;height:38px;background:#a8a8a8;"></div>
<div style="position:absolute;left:27px;top:470px;width:11px;height:11px;box-sizing:border-box;border:1px solid #a9a9a9;border-radius:1px;background:#fff;"></div>
<div style="position:absolute;left:29px;top:475px;width:7px;height:1px;background:#2a2a2a;"></div>
<div style="position:absolute;left:32px;top:481px;width:1px;height:46px;background:#a8a8a8;"></div>
<div style="position:absolute;left:40px;top:485px;width:11px;height:11px;box-sizing:border-box;border:1px solid #a9a9a9;border-radius:1px;background:#fff;"></div>
<div style="position:absolute;left:42px;top:490px;width:7px;height:1px;background:#2a2a2a;"></div>
<div style="position:absolute;left:45px;top:496px;width:1px;height:31px;background:#a8a8a8;"></div>
<div style="position:absolute;left:53px;top:500px;width:11px;height:11px;box-sizing:border-box;border:1px solid #a9a9a9;border-radius:1px;background:#fff;"></div>
<div style="position:absolute;left:55px;top:505px;width:7px;height:1px;background:#2a2a2a;"></div>
<div style="position:absolute;left:58px;top:511px;width:1px;height:16px;background:#a8a8a8;"></div>
<div style="position:absolute;left:14px;top:530px;width:11px;height:11px;box-sizing:border-box;border:1px solid #a9a9a9;border-radius:1px;background:#fff;"></div>
<div style="position:absolute;left:16px;top:535px;width:7px;height:1px;background:#2a2a2a;"></div>
<div style="position:absolute;left:19px;top:541px;width:1px;height:150px;background:#a8a8a8;"></div>
<div style="position:absolute;left:19px;top:691px;width:60px;height:1px;background:#a8a8a8;"></div>
<div style="position:absolute;left:27px;top:545px;width:11px;height:11px;box-sizing:border-box;border:1px solid #a9a9a9;border-radius:1px;background:#fff;"></div>
<div style="position:absolute;left:29px;top:550px;width:7px;height:1px;background:#2a2a2a;"></div>
<div style="position:absolute;left:32px;top:556px;width:1px;height:135px;background:#a8a8a8;"></div>
<div style="position:absolute;left:40px;top:560px;width:11px;height:11px;box-sizing:border-box;border:1px solid #a9a9a9;border-radius:1px;background:#fff;"></div>
<div style="position:absolute;left:42px;top:565px;width:7px;height:1px;background:#2a2a2a;"></div>
<div style="position:absolute;left:45px;top:571px;width:1px;height:46px;background:#a8a8a8;"></div>
<div style="position:absolute;left:45px;top:617px;width:34px;height:1px;background:#a8a8a8;"></div>
<div style="position:absolute;left:53px;top:575px;width:11px;height:11px;box-sizing:border-box;border:1px solid #a9a9a9;border-radius:1px;background:#fff;"></div>
<div style="position:absolute;left:55px;top:580px;width:7px;height:1px;background:#2a2a2a;"></div>
<div style="position:absolute;left:58px;top:586px;width:1px;height:31px;background:#a8a8a8;"></div>
<div style="position:absolute;left:40px;top:627px;width:11px;height:11px;box-sizing:border-box;border:1px solid #a9a9a9;border-radius:1px;background:#fff;"></div>
<div style="position:absolute;left:42px;top:632px;width:7px;height:1px;background:#2a2a2a;"></div>
<div style="position:absolute;left:45px;top:638px;width:1px;height:53px;background:#a8a8a8;"></div>
<div style="position:absolute;left:53px;top:649px;width:11px;height:11px;box-sizing:border-box;border:1px solid #a9a9a9;border-radius:1px;background:#fff;"></div>
<div style="position:absolute;left:55px;top:654px;width:7px;height:1px;background:#2a2a2a;"></div>
<div style="position:absolute;left:58px;top:660px;width:1px;height:31px;background:#a8a8a8;"></div>
<div class="t" style="left:84px;top:726.07px;font-size:20px;color:#2a2a2a;font-weight:bold;letter-spacing:0.63px;">Итого товаров в единицах хранения</div>
<div style="position:absolute;left:79px;top:762px;width:382px;height:50px;background:#f2ebc7;"></div>
<div style="position:absolute;left:79px;top:827px;width:382px;height:18px;background:#f2ebc7;"></div>
<div style="position:absolute;left:79px;top:762px;width:383px;height:1px;background:#cdbf8c;"></div>
<div style="position:absolute;left:79px;top:812px;width:383px;height:1px;background:#cdbf8c;"></div>
<div style="position:absolute;left:79px;top:827px;width:383px;height:1px;background:#cdbf8c;"></div>
<div style="position:absolute;left:79px;top:844px;width:383px;height:1px;background:#cdbf8c;"></div>
<div style="position:absolute;left:125px;top:779px;width:337px;height:1px;background:#cdbf8c;"></div>
<div style="position:absolute;left:461px;top:762px;width:1px;height:83px;background:#cdbf8c;"></div>
<div style="position:absolute;left:125px;top:762px;width:1px;height:83px;background:#cdbf8c;"></div>
<div style="position:absolute;left:209px;top:779px;width:1px;height:66px;background:#cdbf8c;"></div>
<div style="position:absolute;left:293px;top:779px;width:1px;height:66px;background:#cdbf8c;"></div>
<div style="position:absolute;left:377px;top:779px;width:1px;height:66px;background:#cdbf8c;"></div>
<div class="t" style="left:82.5px;top:765.44px;font-size:13.3px;color:#2a2a2a;letter-spacing:-0.15px;">Ед.</div>
<div class="t" style="left:82.5px;top:781.44px;font-size:13.3px;color:#2a2a2a;letter-spacing:-0.15px;">изм.</div>
<div class="t" style="left:129px;top:765.44px;font-size:13.3px;color:#2a2a2a;letter-spacing:-0.15px;">Количество</div>
<div class="t" style="left:129px;top:782.44px;font-size:13.3px;color:#2a2a2a;letter-spacing:-0.15px;">Начальный</div>
<div class="t" style="left:129px;top:798.44px;font-size:13.3px;color:#2a2a2a;letter-spacing:-0.15px;">остаток</div>
<div class="t" style="left:213px;top:782.44px;font-size:13.3px;color:#2a2a2a;letter-spacing:-0.15px;">Приход</div>
<div class="t" style="left:297px;top:782.44px;font-size:13.3px;color:#2a2a2a;letter-spacing:-0.15px;">Расход</div>
<div class="t" style="left:381px;top:782.44px;font-size:13.3px;color:#2a2a2a;letter-spacing:-0.15px;">Конечный</div>
<div class="t" style="left:381px;top:798.44px;font-size:13.3px;color:#2a2a2a;letter-spacing:-0.15px;">остаток</div>
<div class="t" style="left:81px;top:814.69px;font-size:11px;color:#262626;letter-spacing:-0.01px;">шт</div>
<div class="t" style="right:1405.3px;top:814.69px;font-size:11px;color:#262626;letter-spacing:-0.4px;">4,000</div>
<div class="t" style="right:1321.3px;top:814.69px;font-size:11px;color:#262626;letter-spacing:-0.4px;">3,000</div>
<div class="t" style="right:1237.3px;top:814.69px;font-size:11px;color:#262626;letter-spacing:-0.4px;">1,000</div>
<div class="t" style="left:82.5px;top:830.24px;font-size:13.3px;color:#2a2a2a;letter-spacing:-0.15px;">Итого</div>
<div class="t" style="right:1406.2px;top:829.74px;font-size:13.3px;color:#262626;letter-spacing:-0.2px;">4,000</div>
<div class="t" style="right:1322.2px;top:829.74px;font-size:13.3px;color:#262626;letter-spacing:-0.2px;">3,000</div>
<div class="t" style="right:1238.2px;top:829.74px;font-size:13.3px;color:#262626;letter-spacing:-0.2px;">1,000</div>
</body></html>
